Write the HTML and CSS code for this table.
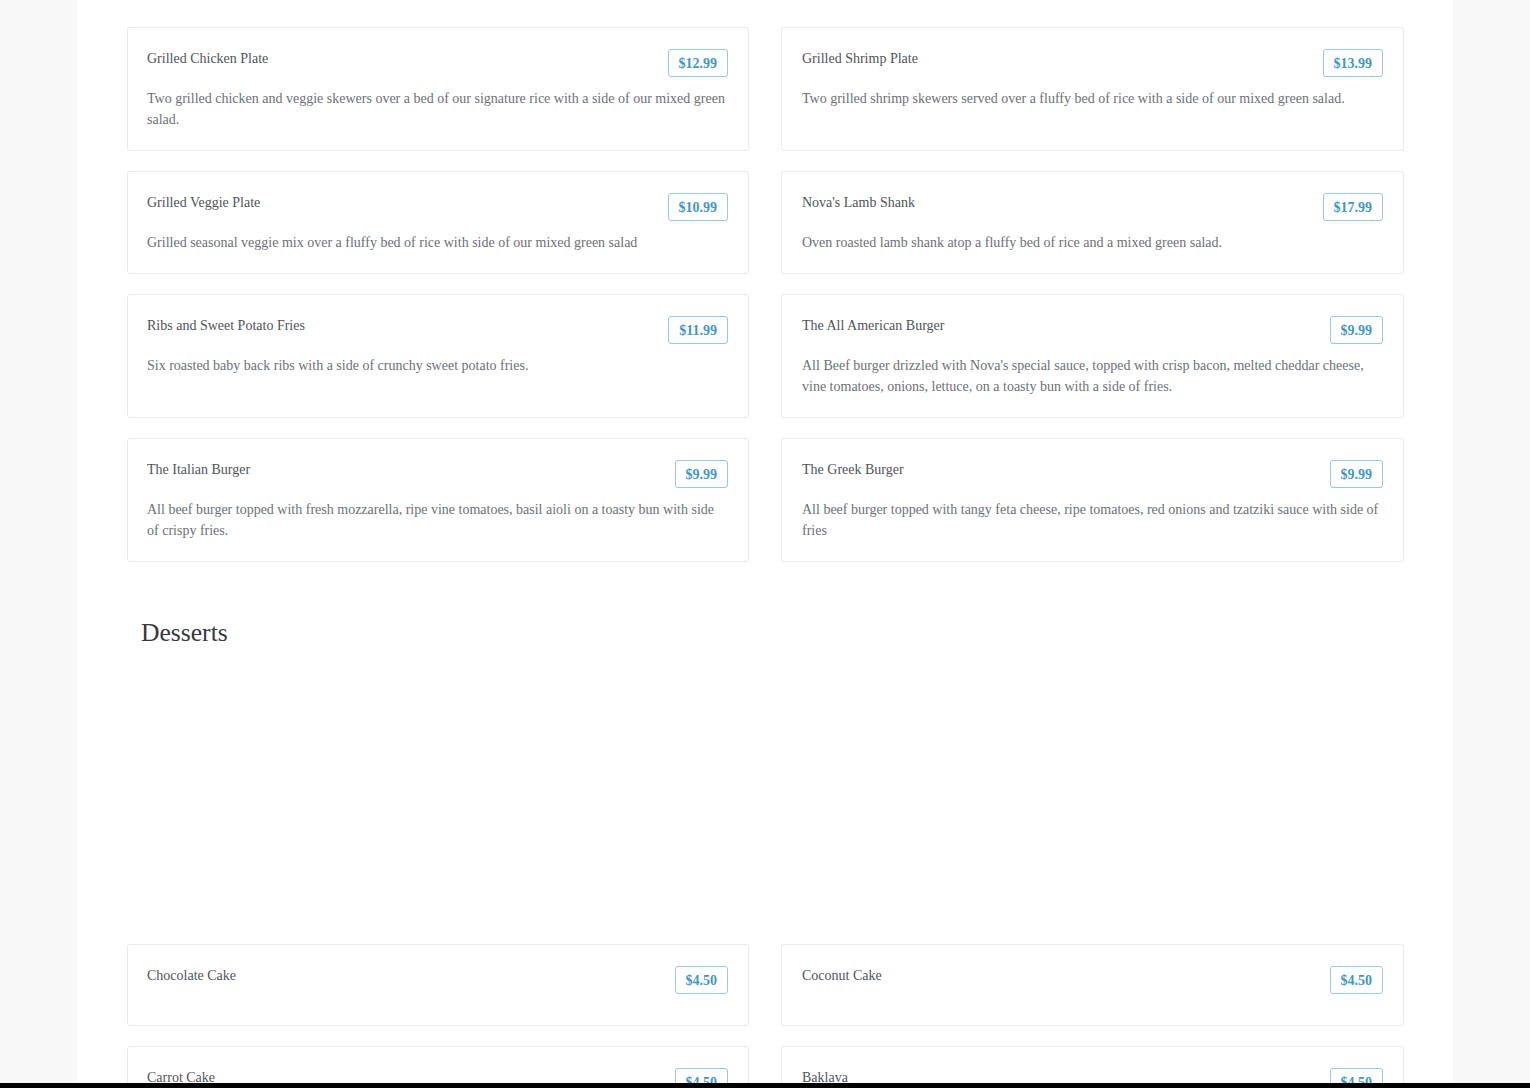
FILE: index.html
```html
<!DOCTYPE html>
<html lang="en">
<head>
<meta charset="utf-8">
<title>Menu</title>
<link rel="stylesheet" href="styles.css">
</head>
<body>
<main class="page">
  <section class="menu-grid">
    <article class="card">
      <div class="card-head"><h3 class="item-name">Grilled Chicken Plate</h3><span class="price">$12.99</span></div>
      <p class="item-desc">Two grilled chicken and veggie skewers over a bed of our signature rice with a side of our mixed green salad.</p>
    </article>
    <article class="card">
      <div class="card-head"><h3 class="item-name">Grilled Shrimp Plate</h3><span class="price">$13.99</span></div>
      <p class="item-desc">Two grilled shrimp skewers served over a fluffy bed of rice with a side of our mixed green salad.</p>
    </article>
    <article class="card">
      <div class="card-head"><h3 class="item-name">Grilled Veggie Plate</h3><span class="price">$10.99</span></div>
      <p class="item-desc">Grilled seasonal veggie mix over a fluffy bed of rice with side of our mixed green salad</p>
    </article>
    <article class="card">
      <div class="card-head"><h3 class="item-name">Nova's Lamb Shank</h3><span class="price">$17.99</span></div>
      <p class="item-desc">Oven roasted lamb shank atop a fluffy bed of rice and a mixed green salad.</p>
    </article>
    <article class="card">
      <div class="card-head"><h3 class="item-name">Ribs and Sweet Potato Fries</h3><span class="price">$11.99</span></div>
      <p class="item-desc">Six roasted baby back ribs with a side of crunchy sweet potato fries.</p>
    </article>
    <article class="card">
      <div class="card-head"><h3 class="item-name">The All American Burger</h3><span class="price">$9.99</span></div>
      <p class="item-desc">All Beef burger drizzled with Nova's special sauce, topped with crisp bacon, melted cheddar cheese, vine tomatoes, onions, lettuce, on a toasty bun with a side of fries.</p>
    </article>
    <article class="card">
      <div class="card-head"><h3 class="item-name">The Italian Burger</h3><span class="price">$9.99</span></div>
      <p class="item-desc">All beef burger topped with fresh mozzarella, ripe vine tomatoes, basil aioli on a toasty bun with side of crispy fries.</p>
    </article>
    <article class="card">
      <div class="card-head"><h3 class="item-name">The Greek Burger</h3><span class="price">$9.99</span></div>
      <p class="item-desc">All beef burger topped with tangy feta cheese, ripe tomatoes, red onions and tzatziki sauce with side of fries</p>
    </article>
  </section>

  <h2 class="section-title">Desserts</h2>
  <div class="section-media"></div>

  <section class="menu-grid">
    <article class="card">
      <div class="card-head"><h3 class="item-name">Chocolate Cake</h3><span class="price">$4.50</span></div>
      <p class="item-desc"></p>
    </article>
    <article class="card">
      <div class="card-head"><h3 class="item-name">Coconut Cake</h3><span class="price">$4.50</span></div>
      <p class="item-desc"></p>
    </article>
    <article class="card">
      <div class="card-head"><h3 class="item-name">Carrot Cake</h3><span class="price">$4.50</span></div>
      <p class="item-desc"></p>
    </article>
    <article class="card">
      <div class="card-head"><h3 class="item-name">Baklava</h3><span class="price">$4.50</span></div>
      <p class="item-desc"></p>
    </article>
  </section>
</main>
<div class="bottom-bar"></div>
</body>
</html>
```

FILE: styles.css
```css
html, body {
  margin: 0;
  padding: 0;
  background: #f8f8f8;
  font-family: "Liberation Serif", "Times New Roman", serif;
}

.page {
  width: 1376px;
  margin: 0 auto;
  background: #ffffff;
  padding: 27px 49px 40px 50px;
  box-sizing: border-box;
  min-height: 1200px;
}

.menu-grid {
  display: grid;
  grid-template-columns: 622px 623px;
  column-gap: 32px;
  row-gap: 20px;
}

.card {
  border: 1px solid #e8eaec;
  border-radius: 3px;
  padding: 20px;
  background: #fff;
}

.card:nth-child(odd) {
  padding-left: 19px;
}

.card-head {
  display: flex;
  justify-content: space-between;
  align-items: flex-start;
  height: 30px;
  margin-bottom: 10px;
}

.item-name {
  margin: 0;
  font-size: 14px;
  font-weight: normal;
  line-height: 21px;
  color: #4f5459;
}

.price {
  margin-top: 1px;
  border: 1px solid #98c9e3;
  border-radius: 3px;
  padding: 0 10px;
  height: 26px;
  line-height: 27px;
  font-size: 14px;
  font-weight: bold;
  color: #3e97cc;
}

.item-desc {
  margin: 0;
  font-size: 14px;
  line-height: 21px;
  color: #6c7176;
}

.section-title {
  margin: 46px 0 0 14px;
  font-size: 25.6px;
  font-weight: normal;
  line-height: 50px;
  color: #343a40;
}

.section-media {
  height: 286px;
}

.bottom-bar {
  position: fixed;
  left: 0;
  right: 0;
  bottom: 0;
  height: 5px;
  background: #000;
}
```
